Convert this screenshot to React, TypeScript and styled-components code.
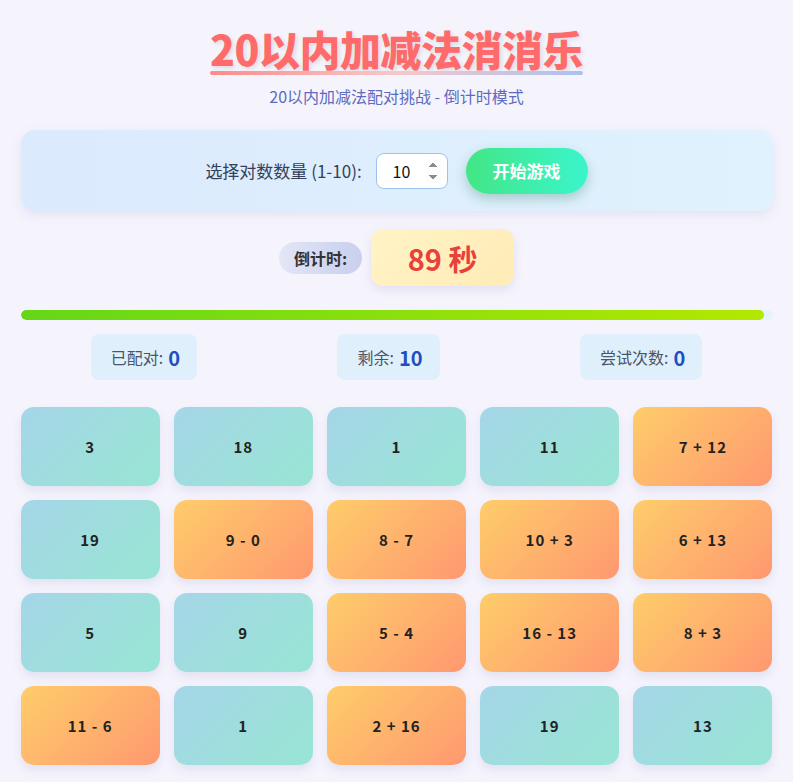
import styled, { createGlobalStyle } from "styled-components";

const GlobalStyle = createGlobalStyle`
  body {
    margin: 0;
    background: #f5f4fd;
    font-family: "Noto Sans CJK SC", "Noto Sans", sans-serif;
    color: #333;
  }
`;

const Page = styled.div`
  width: 752px;
  margin: 0 auto;
  padding: 24px 0 16px;
  display: flex;
  flex-direction: column;
  align-items: center;
`;

const Title = styled.h1`
  margin: 0;
  font-size: 41px;
  font-weight: 900;
  line-height: 48px;
  color: #ff6b6b;
  letter-spacing: -0.5px;
  text-shadow: 2px 2px 4px rgba(0, 0, 0, 0.1);
  position: relative;
  padding-bottom: 4px;

  &::after {
    content: "";
    position: absolute;
    left: 0;
    right: 0;
    bottom: 1px;
    height: 4px;
    border-radius: 2px;
    background: linear-gradient(90deg, #ff8a8a, #f7c8c8 50%, #a9c2f0);
  }
`;

const Subtitle = styled.p`
  margin: 8px 0 0;
  font-size: 16px;
  color: #5c6bc0;
`;

const ControlPanel = styled.div`
  margin-top: 22px;
  width: 100%;
  height: 81px;
  border-radius: 14px;
  background: linear-gradient(90deg, #dbeafd, #e0f2fd);
  box-shadow: 0 4px 12px rgba(100, 100, 160, 0.12);
  display: flex;
  align-items: center;
  justify-content: center;
  gap: 18px;
`;

const Label = styled.label`
  font-size: 17px;
  color: #34405a;
  margin-right: -4px;
`;

const NumberInput = styled.input`
  box-sizing: border-box;
  width: 72px;
  height: 36px;
  border: 1px solid #9cc3ec;
  border-radius: 8px;
  padding: 0 6px 0 16px;
  font-size: 16px;
  font-family: inherit;
  background: #fff;
  color: #111;
  outline: none;

  &::-webkit-inner-spin-button {
    opacity: 1;
  }
`;

const StartButton = styled.button`
  width: 122px;
  height: 46px;
  border: none;
  border-radius: 24px;
  background: linear-gradient(90deg, #43e685, #3af5cc);
  color: #fff;
  font-family: inherit;
  font-size: 17px;
  font-weight: 700;
  box-shadow: 0 5px 12px rgba(40, 120, 90, 0.3);
  cursor: pointer;
`;

const TimerRow = styled.div`
  margin-top: 18px;
  display: flex;
  align-items: center;
  gap: 9px;
`;

const TimerLabel = styled.div`
  height: 32px;
  padding: 0 15px;
  border-radius: 16px;
  display: flex;
  align-items: center;
  font-size: 16px;
  font-weight: 700;
  color: #333;
  background: linear-gradient(90deg, #e2e6f6, #c9cfee);
`;

const TimerValue = styled.div`
  width: 143px;
  height: 57px;
  border-radius: 12px;
  display: flex;
  align-items: center;
  justify-content: center;
  font-size: 29px;
  font-weight: 700;
  color: #e8413a;
  background: linear-gradient(135deg, #fff3c6, #ffecb6);
  box-shadow: 0 4px 10px rgba(120, 110, 160, 0.15);
`;

const Track = styled.div`
  margin-top: 24px;
  width: 100%;
  height: 10px;
  border-radius: 5px;
  background: #e6f4fa;
  overflow: hidden;
`;

const Fill = styled.div`
  height: 100%;
  border-radius: 5px;
  background: linear-gradient(90deg, #64d718, #b3e800);
`;

const Stats = styled.div`
  margin-top: 14px;
  width: 100%;
  display: flex;
  justify-content: space-around;
`;

const StatBox = styled.div`
  height: 46px;
  padding: 0 17px 0 20px;
  border-radius: 8px;
  background: #dff0fc;
  display: flex;
  align-items: center;
  font-size: 16px;
  color: #4a5568;
`;

const StatValue = styled.span`
  margin-left: 5px;
  font-size: 20px;
  font-weight: 700;
  color: #1e4fc2;
`;

const Grid = styled.div`
  margin-top: 27px;
  width: 100%;
  display: grid;
  grid-template-columns: repeat(5, 1fr);
  gap: 14px;
`;

const Card = styled.div<{ $kind: "num" | "expr" }>`
  height: 79px;
  border-radius: 13px;
  display: flex;
  align-items: center;
  justify-content: center;
  font-size: 15px;
  font-weight: 700;
  letter-spacing: 1px;
  color: #222;
  white-space: pre;
  background: ${(p) =>
    p.$kind === "num"
      ? "linear-gradient(135deg, #a5d6e8, #98e5d3)"
      : "linear-gradient(135deg, #fecd6a, #ff9870)"};
  box-shadow: 0 5px 10px rgba(110, 110, 160, 0.14);
`;

const cards = [
  "3", "18", "1", "11", "7 + 12",
  "19", "9 - 0", "8 - 7", "10 + 3", "6 + 13",
  "5", "9", "5 - 4", "16 - 13", "8 + 3",
  "11 - 6", "1", "2 + 16", "19", "13",
];

export default function App() {
  return (
    <>
      <GlobalStyle />
      <Page>
        <Title>20以内加减法消消乐</Title>
        <Subtitle>20以内加减法配对挑战 - 倒计时模式</Subtitle>
        <ControlPanel>
          <Label>选择对数数量 (1-10):</Label>
          <NumberInput type="number" min={1} max={10} defaultValue={10} />
          <StartButton>开始游戏</StartButton>
        </ControlPanel>
        <TimerRow>
          <TimerLabel>倒计时:</TimerLabel>
          <TimerValue>89 秒</TimerValue>
        </TimerRow>
        <Track>
          <Fill style={{ width: `${(89 / 90) * 100}%` }} />
        </Track>
        <Stats>
          <StatBox>
            已配对:<StatValue>0</StatValue>
          </StatBox>
          <StatBox>
            剩余:<StatValue>10</StatValue>
          </StatBox>
          <StatBox>
            尝试次数:<StatValue>0</StatValue>
          </StatBox>
        </Stats>
        <Grid>
          {cards.map((c, i) => (
            <Card key={i} $kind={/[+-]/.test(c) ? "expr" : "num"}>
              {c}
            </Card>
          ))}
        </Grid>
      </Page>
    </>
  );
}
